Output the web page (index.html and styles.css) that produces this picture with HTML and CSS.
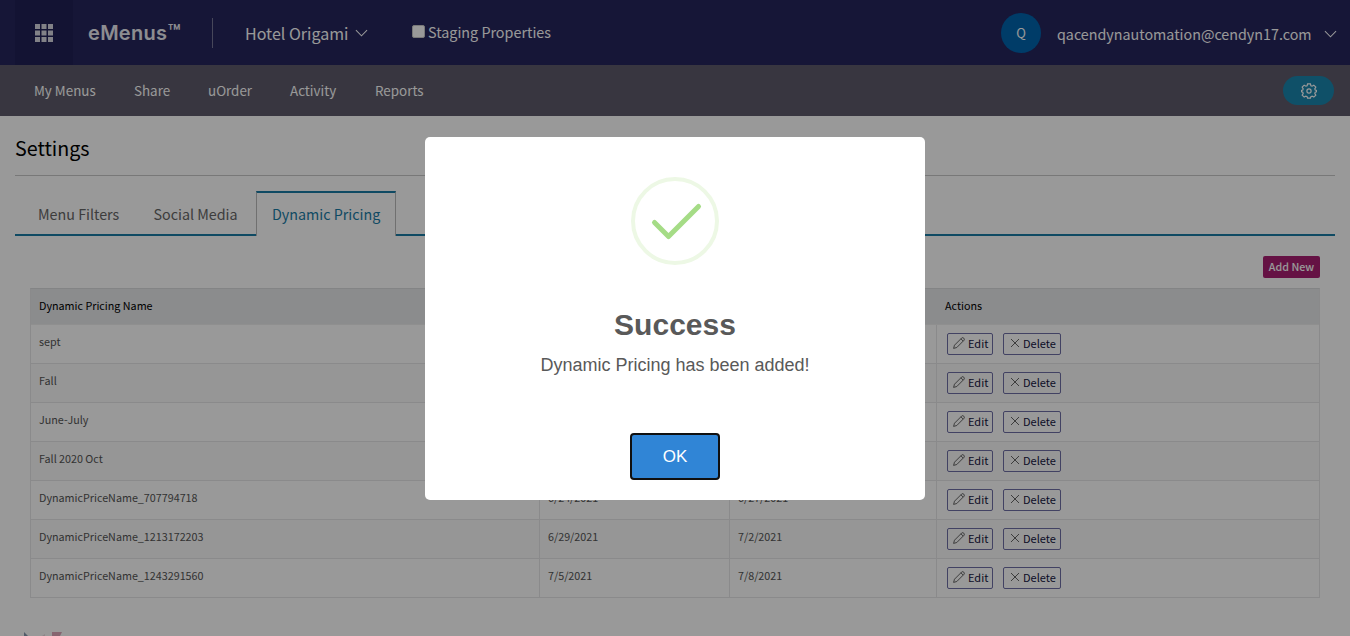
FILE: index.html
```html
<!DOCTYPE html>
<html lang="en">
<head>
<meta charset="utf-8">
<title>eMenus Settings</title>
<link rel="stylesheet" href="styles.css">
</head>
<body>
<svg width="0" height="0" class="defs">
  <symbol id="pencil" viewBox="0 0 12 12"><path d="M.6 11.4 1.5 8.2 8.8.9Q9.8.2 10.8 1.2T11.1 3.200L3.800 10.500ZM7.900 1.800 10.200 4.100"/></symbol>
  <symbol id="cross" viewBox="0 0 10 10"><path d="M1 1 9 9M9 1 1 9"/></symbol>
  <symbol id="chevron" viewBox="0 0 14 8"><path d="M1 1 7 7 13 1"/></symbol>
</svg>
<header class="topbar">
  <div class="apps"><svg class="grid-icon" viewBox="0 0 18 18"><path d="M0 0h5v5H0zM6.500 0h5v5h-5zM13 0h5v5h-5zM0 6.500h5v5H0zM6.500 6.500h5v5h-5zM13 6.500h5v5h-5zM0 13h5v5H0zM6.500 13h5v5h-5zM13 13h5v5h-5z"/></svg></div>
  <div class="brand">eMenus<span class="tm">™</span></div>
  <div class="divider"></div>
  <div class="hotel"><span class="t">Hotel Origami</span><svg class="chev"><use href="#chevron"/></svg></div>
  <div class="staging"><i class="box"></i><span class="t">Staging Properties</span></div>
  <div class="user"><span class="avatar">Q</span><span class="mail">qacendynautomation@cendyn17.com</span><svg class="chev"><use href="#chevron"/></svg></div>
</header>
<nav class="nav">
  <a class="n1">My Menus</a><a class="n2">Share</a><a class="n3">uOrder</a><a class="n4">Activity</a><a class="n5">Reports</a>
  <div class="gear"><svg viewBox="0 0 16 16"><circle cx="8" cy="8" r="2.100"/><path d="M6.600.8h2.800l.5 1.900 1.200.5 1.700-1 2 2-1 1.700.4 1.100 1.300.4v1.500l-1.300.4-.4 1.100 1 1.700-2 2-1.700-1-1.200.5-.5 1.600H6.600l-.5-1.600-1.200-.5-1.700 1-2-2 1-1.700-.4-1.100L.6 8.900V7.400l1.200-.4.4-1.100-1-1.700 2-2 1.700 1 1.200-.5z"/></svg></div>
</nav>
<main class="page">
  <h1>Settings</h1>
  <div class="tabs">
    <a class="tab tab-filters">Menu Filters</a><a class="tab tab-social">Social Media</a><a class="tab active">Dynamic Pricing</a><span class="rest"></span>
  </div>
  <div class="toolbar"><button class="add">Add New</button></div>
  <div class="table">
    <div class="row head"><div>Dynamic Pricing Name</div><div></div><div></div><div>Actions</div></div>
    <div class="row"><div>sept</div><div></div><div></div><div class="acts"><span class="btn edit"><svg><use href="#pencil"/></svg>Edit</span><span class="btn del"><svg><use href="#cross"/></svg>Delete</span></div></div>
    <div class="row"><div>Fall</div><div></div><div></div><div class="acts"><span class="btn edit"><svg><use href="#pencil"/></svg>Edit</span><span class="btn del"><svg><use href="#cross"/></svg>Delete</span></div></div>
    <div class="row"><div>June-July</div><div></div><div></div><div class="acts"><span class="btn edit"><svg><use href="#pencil"/></svg>Edit</span><span class="btn del"><svg><use href="#cross"/></svg>Delete</span></div></div>
    <div class="row"><div>Fall 2020 Oct</div><div></div><div></div><div class="acts"><span class="btn edit"><svg><use href="#pencil"/></svg>Edit</span><span class="btn del"><svg><use href="#cross"/></svg>Delete</span></div></div>
    <div class="row"><div>DynamicPriceName_707794718</div><div>6/24/2021</div><div>6/27/2021</div><div class="acts"><span class="btn edit"><svg><use href="#pencil"/></svg>Edit</span><span class="btn del"><svg><use href="#cross"/></svg>Delete</span></div></div>
    <div class="row"><div>DynamicPriceName_1213172203</div><div>6/29/2021</div><div>7/2/2021</div><div class="acts"><span class="btn edit"><svg><use href="#pencil"/></svg>Edit</span><span class="btn del"><svg><use href="#cross"/></svg>Delete</span></div></div>
    <div class="row"><div>DynamicPriceName_1243291560</div><div>7/5/2021</div><div>7/8/2021</div><div class="acts"><span class="btn edit"><svg><use href="#pencil"/></svg>Edit</span><span class="btn del"><svg><use href="#cross"/></svg>Delete</span></div></div>
  </div>
  <svg class="footer-mark" viewBox="0 0 40 4"><path fill="#8798b0" d="M0 0 4 4H0z"/><path fill="#e0a9bb" d="M28 0H38L36 4H28z"/><path fill="#ecdde2" d="M18 4 21 2V4z"/></svg>
</main>
<div class="overlay">
  <div class="modal">
    <svg class="check" viewBox="0 0 88 88"><circle cx="44" cy="44" r="42"/><path d="M23.500 45.500 37.500 59.500 67.500 29.500"/></svg>
    <h2>Success</h2>
    <p>Dynamic Pricing has been added!</p>
    <button class="ok">OK</button>
  </div>
</div>
</body>
</html>
```
FILE: styles.css
```css
* { box-sizing: border-box; }
body { margin: 0; height: 636px; overflow: hidden; background: #fff; font-family: "Noto Sans CJK SC", "Open Sans", sans-serif; }
.defs { display: none; }
button { font-family: inherit; margin: 0; }
svg { fill: none; }
.topbar { height: 65px; background: #25255c; display: flex; align-items: center; color: #fff; padding-left: 15px; }
.apps { width: 58px; height: 65px; background: #212155; display: flex; align-items: center; justify-content: center; }
.grid-icon { width: 18px; height: 18px; fill: #d8d8e2; }
.brand { margin-left: 15px; width: 124px; font: 600 20px/30px Inter, sans-serif; letter-spacing: .3px; color: #ececf2; }
.tm { font-size: 21px; letter-spacing: 0; }
.divider { width: 1px; height: 30px; background: #777796; }
.hotel { margin-left: 32px; width: 167px; display: flex; align-items: center; gap: 7px; font-size: 16.050px; line-height: 24px; white-space: nowrap; }
.chev { width: 13px; height: 8px; stroke: #fff; stroke-width: 1.100; }
.staging { display: flex; align-items: center; gap: 3px; font-size: 14.350px; line-height: 24px; white-space: nowrap; padding-bottom: 2px; }
.box { width: 13px; height: 13px; background: #fff; border: 1px solid #c8c8c8; border-radius: 2px; }
.user { margin-left: auto; padding-right: 13px; display: flex; align-items: center; font-size: 14.300px; line-height: 24px; white-space: nowrap; }
.avatar { width: 40px; height: 40px; border-radius: 50%; background: #0064ae; display: flex; align-items: center; justify-content: center; font-size: 13px; padding-top: 1px; margin-right: 16px; }
.mail { width: 267px; padding-top: 2px; }
.user .chev { margin-top: 2px; }
.nav { height: 51px; background: #5e5b6b; display: flex; align-items: center; padding: 0 16px 0 34px; color: #fff; font-size: 13.400px; }
.nav a { line-height: 20px; padding-bottom: 2px; }
.n1 { width: 100px; } .n2 { width: 74px; } .n3 { width: 82px; } .n4 { width: 85px; }
.gear { margin-left: auto; width: 51px; height: 29px; border-radius: 15px; background: #1a86ae; display: flex; align-items: center; justify-content: center; }
.gear svg { width: 16px; height: 16px; stroke: #fff; stroke-width: 1.200; }
.page { padding: 0 15px; }
h1 { margin: 0; height: 60px; border-bottom: 1px solid #c8c8c8; font-size: 19.700px; font-weight: 400; line-height: 64px; color: #000; }
.tabs { margin-top: 15px; height: 45px; display: flex; font-size: 14.300px; color: #666; }
.tab { border-bottom: 2px solid #1a7ca6; line-height: 46px; white-space: nowrap; }
.tab-filters { padding-left: 23px; width: 138.500px; }
.tab-social { width: 102.500px; }
.active { width: 140px; padding-left: 15px; line-height: 42px; color: #1a7ca6; border: 1px solid #bbb; border-top: 2px solid #1a7ca6; border-bottom: 0; }
.rest { flex: 1; border-bottom: 2px solid #1a7ca6; }
.toolbar { height: 52px; padding: 20px 15px 0 0; display: flex; justify-content: flex-end; align-items: flex-start; }
.add { width: 57px; height: 22px; border: 0; border-radius: 2px; padding: 0; background: #a91f72; color: #fff; font-size: 10.700px; line-height: 20px; font-weight: 500; }
.table { margin: 0 15px; border: 1px solid #e6e6e8; border-top-color: #dadcde; font-size: 10.750px; color: #555; }
.row { height: 39px; display: grid; grid-template-columns: 508px 190px 207px 1fr; border-bottom: 1px solid #e6e6e8; }
.row:nth-child(odd) { background: #fafafa; }
.row:last-child { border-bottom: 0; height: 38px; }
.row > div { padding-left: 8px; border-left: 1px solid #e6e6e8; line-height: 33px; }
.row > div:first-child { border-left: 0; }
.head.row { height: 36px; background: #e8e9eb; color: #000; border-bottom: 1px solid #eeeeef; }
.head.row > div { border-color: transparent; line-height: 33px; }
.row > .acts { padding: 8px 0 0 10px; display: flex; gap: 10px; align-items: flex-start; }
.btn { height: 22px; border: 1px solid #6e6ea5; border-radius: 2px; display: flex; align-items: center; color: #15153f; line-height: 18px; padding-bottom: 2px; font-size: 11px; white-space: nowrap; }
.edit { width: 46px; padding-left: 5px; gap: 3px; }
.edit svg { width: 12px; height: 12px; }
.del { width: 58px; padding-left: 6px; gap: 3px; }
.del svg { width: 10px; height: 10px; }
.btn svg { stroke: #555; stroke-width: .9; flex: none; }
.footer-mark { display: block; width: 40px; height: 4px; margin: 34px 0 0 9px; }
.overlay { position: fixed; inset: 0; background: rgba(0,0,0,.4); display: flex; justify-content: center; align-items: flex-start; padding-top: 137px; }
.modal { width: 500px; height: 363px; border-radius: 5px; background: #fff; display: flex; flex-direction: column; align-items: center; padding-top: 40px; font-family: "Liberation Sans", Arial, sans-serif; color: #595959; }
.check { width: 88px; height: 88px; }
.check circle { stroke: #edf8e5; stroke-width: 4; }
.check path { stroke: #a5dc86; stroke-width: 5; stroke-linecap: round; stroke-linejoin: round; }
h2 { margin: 42px 0 0; font-size: 30px; line-height: 36px; font-weight: 700; }
p { margin: 12px 0 0; font-size: 18px; line-height: 21px; }
.ok { margin-top: 57px; width: 90px; height: 47px; border: 2px solid #101010; border-radius: 4px; background: #3085d6; color: #fff; font-size: 17px; }
```
